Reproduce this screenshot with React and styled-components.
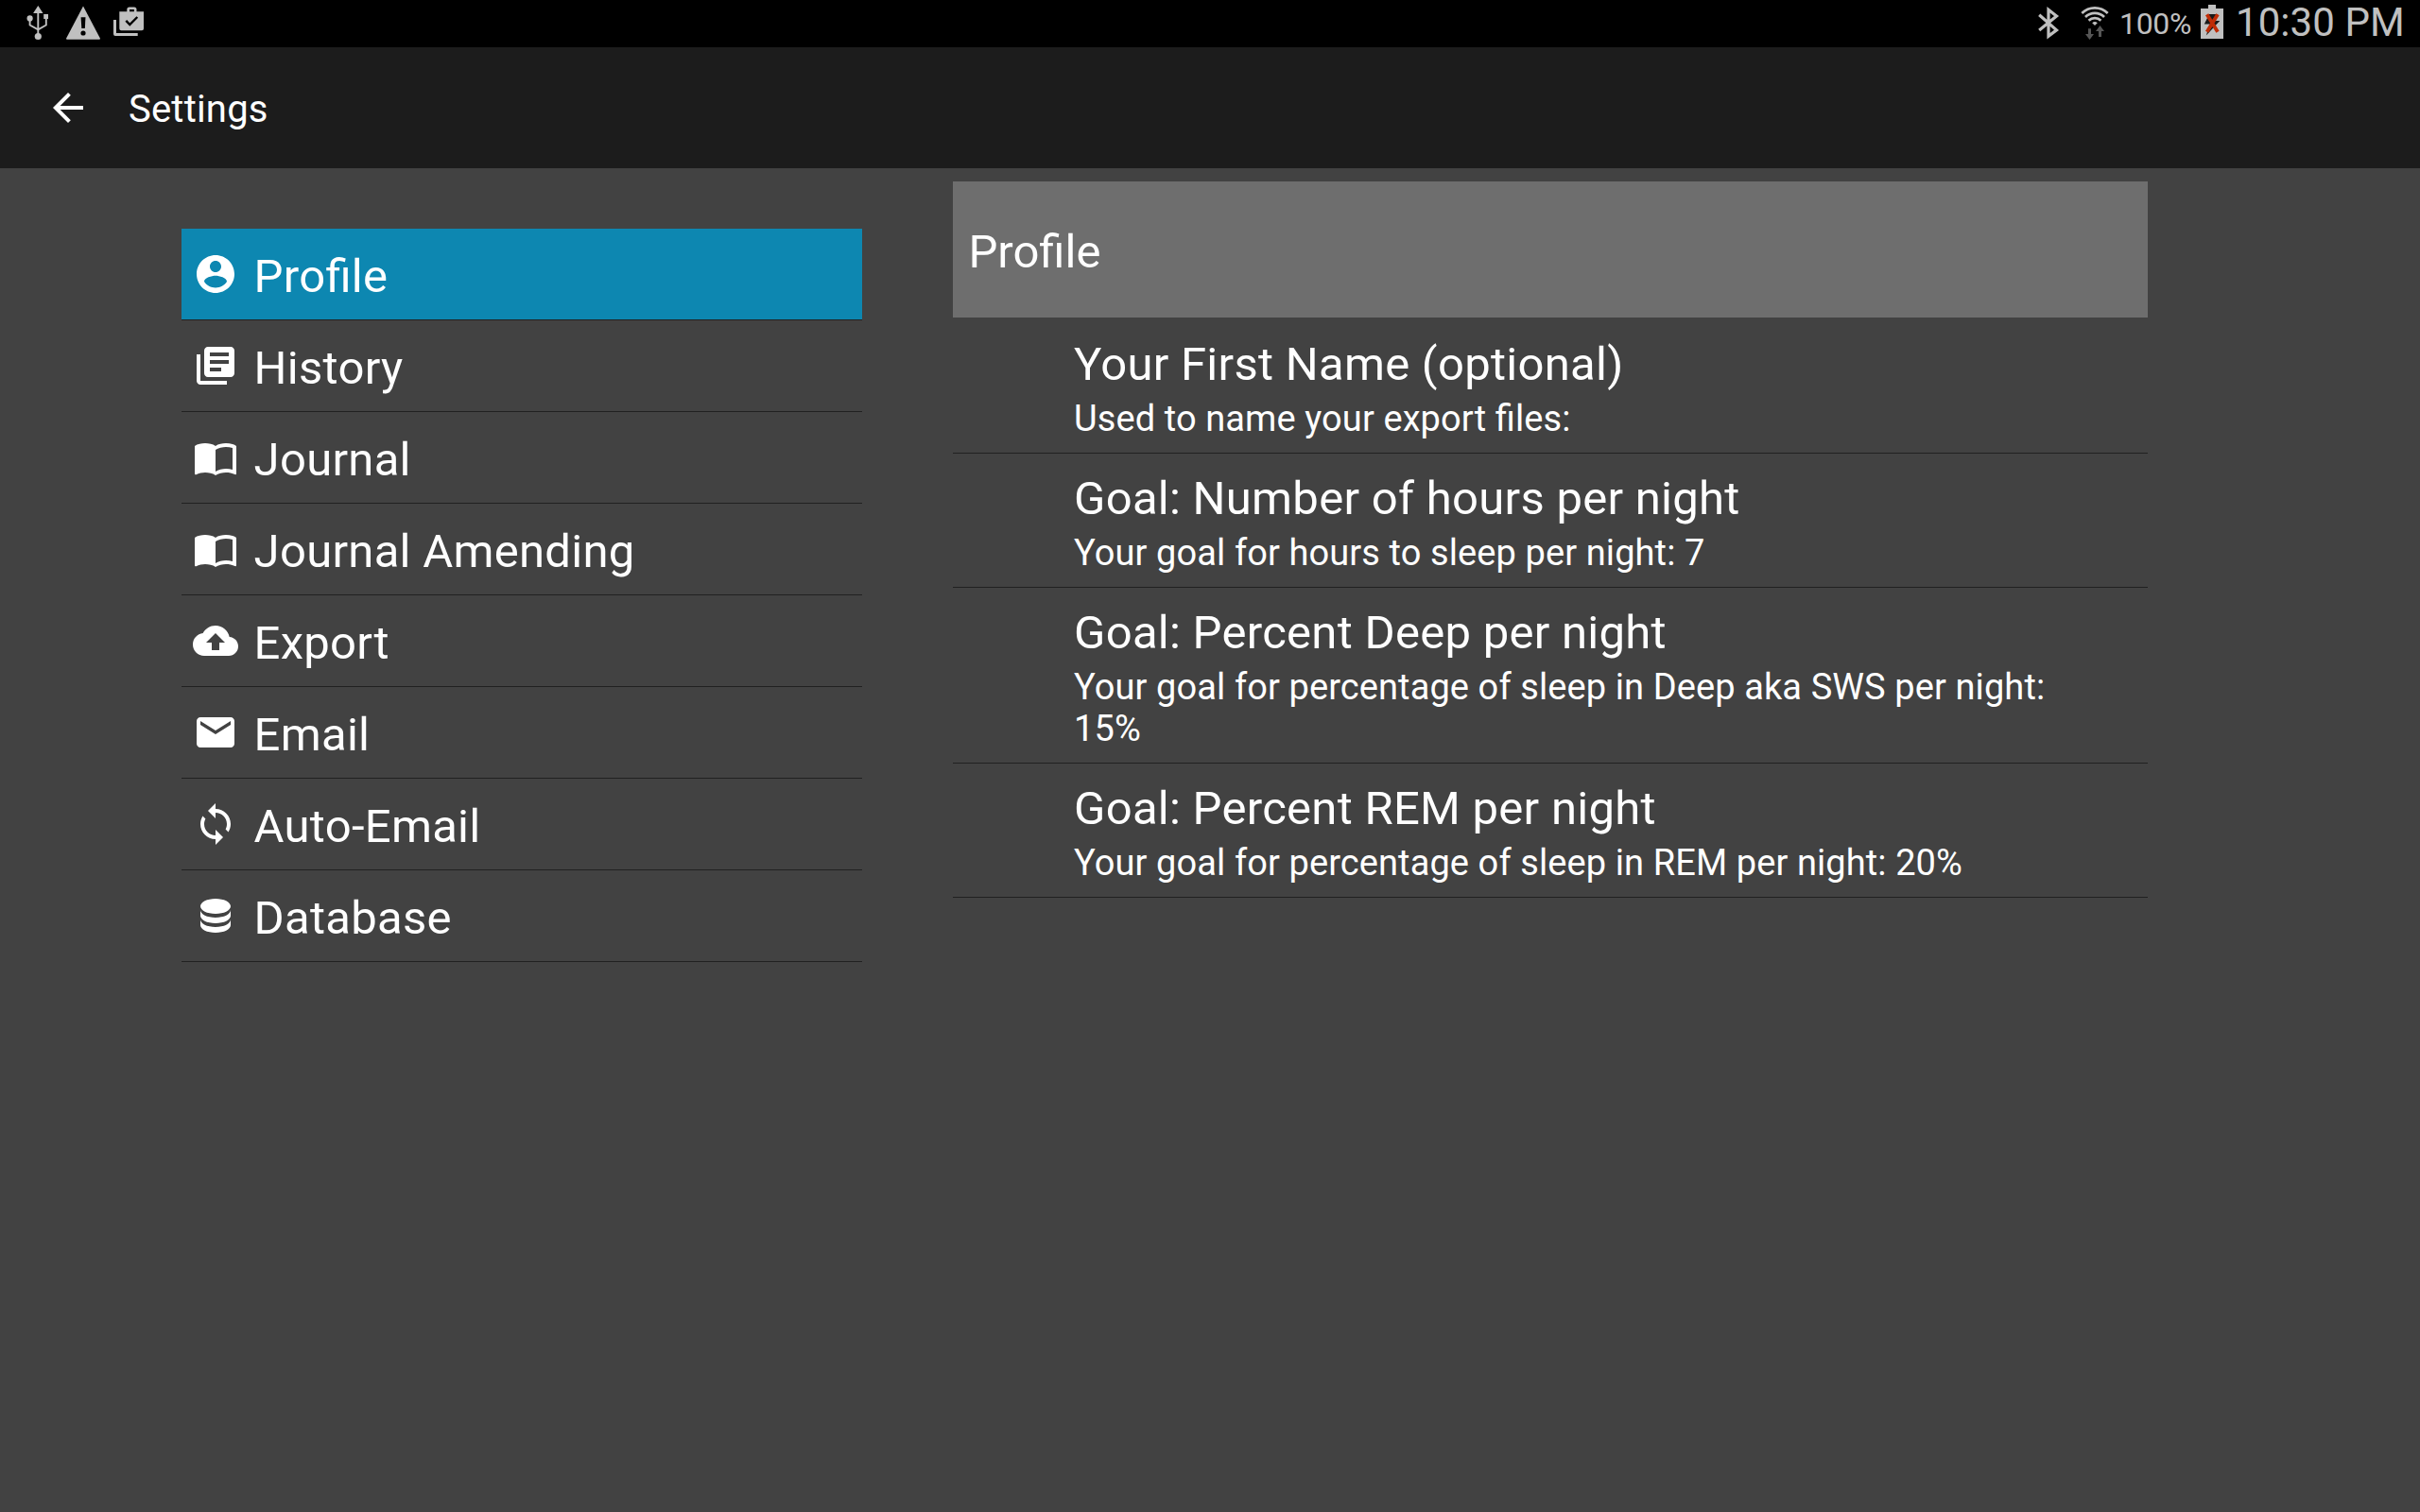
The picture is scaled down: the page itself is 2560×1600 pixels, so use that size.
import React from "react";
import styled, { createGlobalStyle } from "styled-components";

const GlobalStyle = createGlobalStyle`
  * { box-sizing: border-box; }
  body {
    margin: 0;
    background: #424242;
    color: #fff;
    font-family: Roboto, "Liberation Sans", sans-serif;
    font-feature-settings: "liga" 1;
  }
`;

const Screen = styled.div`
  width: 2560px;
  height: 1600px;
  display: flex;
  flex-direction: column;
  background: #424242;
  overflow: hidden;
`;

const StatusBar = styled.header`
  height: 50px;
  flex: none;
  display: flex;
  justify-content: space-between;
  background: #000;
  color: #c0c0c0;
`;

const StatusGroup = styled.div`
  display: flex;
  height: 50px;
  padding-left: ${(p) => p.$start || 0}px;
`;

const StatusGlyph = styled.svg`
  width: ${(p) => p.$w}px;
  height: 50px;
  flex: none;
  display: block;
`;

const BatteryLevel = styled.span`
  width: 85px;
  font-size: 32px;
  line-height: 50px;
  letter-spacing: -0.3px;
  white-space: nowrap;
`;

const Clock = styled.span`
  width: 195px;
  font-size: 42px;
  line-height: 48px;
  letter-spacing: 0.08px;
  white-space: nowrap;
`;

const ActionBar = styled.nav`
  height: 128px;
  flex: none;
  display: flex;
  align-items: center;
  padding-left: 48px;
  gap: 40px;
  background: #1c1c1c;
`;

const ScreenTitle = styled.h1`
  margin: 0;
  padding-top: 3px;
  font-size: 40px;
  font-weight: 400;
  line-height: 48px;
  letter-spacing: 0.2px;
`;

const Icon = styled.svg`
  width: 48px;
  height: 48px;
  flex: none;
  display: block;
  fill: #fff;
`;

const Content = styled.main`
  flex: 1;
  display: flex;
  align-items: flex-start;
  gap: 96px;
  padding-left: 192px;
`;

const SectionList = styled.ul`
  width: 720px;
  margin: 64px 0 0;
  padding: 0;
  list-style: none;
`;

const SectionItem = styled.li`
  height: 97px;
  display: flex;
  align-items: center;
  gap: 16.6px;
  padding-left: 12px;
  border-bottom: 1px solid #212121;
  background: ${(p) => (p.$selected ? "#0d87b1" : "transparent")};
`;

const SectionLabel = styled.span`
  padding-top: 5px;
  font-size: 49px;
  line-height: 57px;
  letter-spacing: 0.28px;
  white-space: nowrap;
`;

const Panel = styled.section`
  width: 1264px;
  margin-top: 14px;
`;

const PanelHeader = styled.h2`
  height: 144px;
  margin: 0 0 2px;
  padding: 5px 0 0 16.4px;
  display: flex;
  align-items: center;
  background: #6e6e6e;
  font-size: 49px;
  font-weight: 400;
  line-height: 57px;
`;

const Preference = styled.div`
  padding: 19px 96px 14px 128px;
  border-bottom: 1px solid #212121;
`;

const PreferenceTitle = styled.h3`
  margin: 0 0 7px;
  font-size: 49px;
  font-weight: 400;
  line-height: 57px;
  letter-spacing: 0.28px;
`;

const PreferenceSummary = styled.p`
  margin: 0;
  font-size: 38px;
  line-height: 44px;
  letter-spacing: 0.1px;
`;

const icons = {
  back: "M20 11H7.83l5.59-5.59L12 4l-8 8 8 8 1.41-1.41L7.83 13H20v-2z",
  account:
    "M12 2C6.48 2 2 6.48 2 12s4.48 10 10 10 10-4.48 10-10S17.52 2 12 2zm0 3c1.66 0 3 1.34 3 3s-1.34 3-3 3-3-1.34-3-3 1.34-3 3-3zm0 14.2c-2.5 0-4.71-1.28-6-3.22.03-1.99 4-3.08 6-3.08 1.99 0 5.97 1.09 6 3.08-1.29 1.94-3.5 3.22-6 3.22z",
  library:
    "M4 6H2v14c0 1.1.9 2 2 2h14v-2H4V6zm16-4H8c-1.1 0-2 .9-2 2v12c0 1.1.9 2 2 2h12c1.1 0 2-.9 2-2V4c0-1.1-.9-2-2-2zm-1 9H9V9h10v2zm-4 4H9v-2h6v2zm4-8H9V5h10v2z",
  book:
    "M21 5C19.89 4.65 18.67 4.5 17.5 4.5 15.55 4.5 13.45 4.9 12 6 10.55 4.9 8.45 4.5 6.5 4.5 4.55 4.5 2.45 4.9 1 6v14.65c0 .25.25.5.5.5.1 0 .15-.05.25-.05C3.1 20.45 5.05 20 6.5 20c1.95 0 4.05.4 5.5 1.5 1.35-.85 3.8-1.5 5.5-1.5 1.65 0 3.35.3 4.75 1.05.1.05.15.05.25.05.25 0 .5-.25.5-.5V6c-.6-.45-1.25-.75-2-1zm0 13.5c-1.1-.35-2.3-.5-3.5-.5-1.7 0-4.15.65-5.5 1.5V8c1.35-.85 3.8-1.5 5.5-1.5 1.2 0 2.4.15 3.5.5v11.5z",
  cloudUpload:
    "M19.35 10.04C18.67 6.59 15.64 4 12 4 9.11 4 6.6 5.64 5.35 8.04 2.34 8.36 0 10.91 0 14c0 3.31 2.69 6 6 6h13c2.76 0 5-2.24 5-5 0-2.64-2.05-4.78-4.65-4.96zM14 13v4h-4v-4H7l5-5 5 5h-3z",
  mail:
    "M20 4H4c-1.1 0-1.99.9-1.99 2L2 18c0 1.1.9 2 2 2h16c1.1 0 2-.9 2-2V6c0-1.1-.9-2-2-2zm0 4l-8 5-8-5V6l8 5 8-5v2z",
  sync:
    "M12 4V1L8 5l4 4V6c3.31 0 6 2.69 6 6 0 1.01-.25 1.97-.7 2.8l1.46 1.46C19.54 15.03 20 13.57 20 12c0-4.42-3.58-8-8-8zm0 14c-3.31 0-6-2.69-6-6 0-1.01.25-1.97.7-2.8L5.24 7.74C4.46 8.97 4 10.43 4 12c0 4.42 3.58 8 8 8v3l4-4-4-4v3z",
  database:
    "M12 3C7.58 3 4 4.79 4 7s3.58 4 8 4 8-1.79 8-4-3.58-4-8-4zM4 9v3c0 2.21 3.58 4 8 4s8-1.79 8-4V9c0 2.21-3.58 4-8 4s-8-1.79-8-4zm0 5v3c0 2.21 3.58 4 8 4s8-1.79 8-4v-3c0 2.21-3.58 4-8 4s-8-1.79-8-4z",
};

const MaterialIcon = ({ name }) => (
  <Icon viewBox="0 0 24 24">
    <path d={icons[name]} />
  </Icon>
);

const UsbIcon = () => (
  <StatusGlyph $w={48} viewBox="16 0 48 50" fill="currentColor">
    <path d="M40.3 6l5.2 8h-10.4z" />
    <circle cx="31.6" cy="19.4" r="3.1" />
    <path d="M46.2 15h4.8v5h-4.8z" />
    <circle cx="40.3" cy="38.5" r="3.6" />
    <path
      d="M40.3 12v25M31.6 20v6.5l8.7 4.8 8.5-4.8V18"
      fill="none"
      stroke="currentColor"
      strokeWidth="1.9"
    />
  </StatusGlyph>
);

const WarningIcon = () => (
  <StatusGlyph $w={48} viewBox="64 0 48 50" fill="currentColor">
    <path d="M88 6.5l18 34.3q0 .9-1 .9H71q-1 0-1-.9z" />
    <path d="M85.6 18.3h4.9l-.7 11.8h-3.5z" fill="#000" />
    <circle cx="88" cy="35" r="2.6" fill="#000" />
  </StatusGlyph>
);

const ShopIcon = () => (
  <StatusGlyph $w={48} viewBox="112 0 48 50" fill="currentColor">
    <path d="M120 21h3v14h22.7v3H122q-2 0-2-2z" />
    <path d="M134.3 12.3V10q0-2.6 2.6-2.6h5q2.6 0 2.6 2.6v2.3h7.5v18q0 2-2 2h-21.7q-2 0-2-2v-18zm2.7 0h4.9V10H137z" />
    <path d="M133.3 21.8l4 4.2 8-8" fill="none" stroke="#000" strokeWidth="2.4" />
  </StatusGlyph>
);

const BluetoothIcon = () => (
  <StatusGlyph $w={52} viewBox="2148 0 52 50">
    <path
      d="M2157.2 15.8l18.3 16-8.5 6.5V10.3l8.5 6.7-18.3 15"
      fill="none"
      stroke="currentColor"
      strokeWidth="3.2"
      strokeMiterlimit="6"
    />
  </StatusGlyph>
);

const WifiIcon = () => (
  <StatusGlyph $w={42} viewBox="2200 0 42 50">
    <g fill="none" stroke="currentColor" strokeWidth="2.7">
      <path d="M2202.3 14a19.4 19.4 0 0 1 27.4 0" />
      <path d="M2206 18a14.2 14.2 0 0 1 20 0" />
      <path d="M2209.6 21.7a9 9 0 0 1 12.8 0" />
    </g>
    <path d="M2213.2 24.2q2.8-2.4 5.6 0l-2.8 2.8z" fill="currentColor" />
    <g fill="#555">
      <path d="M2209 30.3h3V36h3l-4.5 6-4.5-6h3z" />
      <path d="M2220 39v-6h-3l4.5-6 4.5 6h-3v6z" />
    </g>
  </StatusGlyph>
);

const BatteryIcon = () => (
  <StatusGlyph $w={38} viewBox="2327 0 38 50">
    <path d="M2336 5h8v4h8v32h-24V9h8z" fill="currentColor" />
    <path d="M2337 15h9.3l-3 7h5l-14.5 15.5 4-12h-6z" fill="#1a1a1a" />
    <path d="M2334.6 15.3l11.4 18.4M2346 15.3l-11.4 18.4" stroke="#c02c06" strokeWidth="3.8" />
  </StatusGlyph>
);

const sections = [
  { label: "Profile", icon: "account", selected: true },
  { label: "History", icon: "library" },
  { label: "Journal", icon: "book" },
  { label: "Journal Amending", icon: "book" },
  { label: "Export", icon: "cloudUpload" },
  { label: "Email", icon: "mail" },
  { label: "Auto-Email", icon: "sync" },
  { label: "Database", icon: "database" },
];

const preferences = [
  { title: "Your First Name (optional)", summary: "Used to name your export files:" },
  { title: "Goal: Number of hours per night", summary: "Your goal for hours to sleep per night: 7" },
  {
    title: "Goal: Percent Deep per night",
    summary: "Your goal for percentage of sleep in Deep aka SWS per night: 15%",
  },
  {
    title: "Goal: Percent REM per night",
    summary: "Your goal for percentage of sleep in REM per night: 20%",
  },
];

export default function App() {
  return (
    <Screen>
      <GlobalStyle />
      <StatusBar>
        <StatusGroup $start={16}>
          <UsbIcon />
          <WarningIcon />
          <ShopIcon />
        </StatusGroup>
        <StatusGroup>
          <BluetoothIcon />
          <WifiIcon />
          <BatteryLevel>100%</BatteryLevel>
          <BatteryIcon />
          <Clock>10:30 PM</Clock>
        </StatusGroup>
      </StatusBar>
      <ActionBar>
        <MaterialIcon name="back" />
        <ScreenTitle>Settings</ScreenTitle>
      </ActionBar>
      <Content>
        <SectionList>
          {sections.map((s) => (
            <SectionItem key={s.label} $selected={s.selected}>
              <MaterialIcon name={s.icon} />
              <SectionLabel>{s.label}</SectionLabel>
            </SectionItem>
          ))}
        </SectionList>
        <Panel>
          <PanelHeader>Profile</PanelHeader>
          {preferences.map((p) => (
            <Preference key={p.title}>
              <PreferenceTitle>{p.title}</PreferenceTitle>
              <PreferenceSummary>{p.summary}</PreferenceSummary>
            </Preference>
          ))}
        </Panel>
      </Content>
    </Screen>
  );
}
